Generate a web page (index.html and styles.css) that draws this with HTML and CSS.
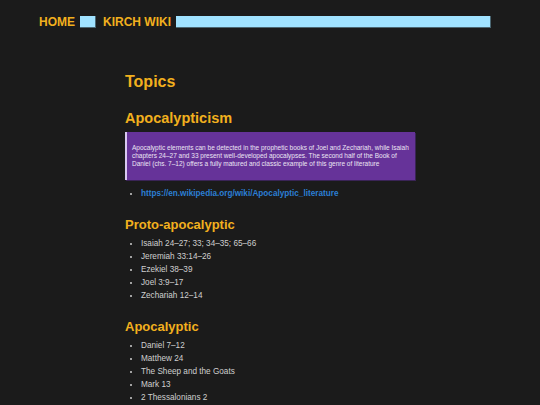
FILE: index.html
```html
<!DOCTYPE html>
<html>
<head>
<meta charset="utf-8">
<link rel="stylesheet" href="styles.css">
</head>
<body>
<nav class="nav">
  <a class="nav-link" href="#">HOME</a>
  <span class="nav-box nav-box-small"></span>
  <a class="nav-link" href="#">KIRCH WIKI</a>
  <span class="nav-box nav-box-wide"></span>
</nav>
<main class="main">
  <h1 class="title">Topics</h1>
  <h2 class="section">Apocalypticism</h2>
  <blockquote class="quote">Apocalyptic elements can be detected in the prophetic books of Joel and Zechariah, while Isaiah chapters 24–27 and 33 present well-developed apocalypses. The second half of the Book of Daniel (chs. 7–12) offers a fully matured and classic example of this genre of literature</blockquote>
  <ul class="list">
    <li><a class="link" href="#">https://en.wikipedia.org/wiki/Apocalyptic_literature</a></li>
  </ul>
  <h3 class="sub">Proto-apocalyptic</h3>
  <ul class="list">
    <li>Isaiah 24–27; 33; 34–35; 65–66</li>
    <li>Jeremiah 33:14–26</li>
    <li>Ezekiel 38–39</li>
    <li>Joel 3:9–17</li>
    <li>Zechariah 12–14</li>
  </ul>
  <h3 class="sub">Apocalyptic</h3>
  <ul class="list">
    <li>Daniel 7–12</li>
    <li>Matthew 24</li>
    <li>The Sheep and the Goats</li>
    <li>Mark 13</li>
    <li>2 Thessalonians 2</li>
  </ul>
</main>
</body>
</html>
```
FILE: styles.css
```css
html, body {
  margin: 0;
  padding: 0;
  background: #1b1b1b;
  font-family: "Liberation Sans", Arial, sans-serif;
  color: #cfcfcf;
}
.nav {
  display: flex;
  align-items: center;
  gap: 5px;
  padding: 16px 49px 0 39px;
  height: 12px;
}
.nav-link {
  color: #f2b01e;
  font-weight: bold;
  font-size: 12px;
  line-height: 12px;
  text-decoration: none;
}
.nav-box {
  height: 12px;
  box-sizing: border-box;
  background: #a0e2ff;
  border-right: 1px solid #4a6672;
  border-bottom: 1px solid #4a6672;
}
.nav-box-small {
  width: 16px;
  margin-right: 2px;
}
.nav-box-wide {
  flex: 1;
}
.main {
  width: 290px;
  margin: 0 auto;
  padding-top: 45px;
}
.title {
  color: #f2b01e;
  font-size: 16px;
  line-height: 18px;
  margin: 0 0 19px;
}
.section {
  color: #f2b01e;
  font-size: 14.5px;
  line-height: 16px;
  margin: 0 0 6px;
}
.sub {
  color: #f2b01e;
  font-size: 13px;
  line-height: 15px;
  margin: 0 0 5px;
}
.quote {
  margin: 0 0 7px;
  background: #663399;
  border-left: 2px solid #d8c8f0;
  box-shadow: 1px 1px 0 #3a2456;
  color: #ece6f4;
  font-size: 6.5px;
  line-height: 8px;
  padding: 12px 6px 12px 5px;
}
.list {
  margin: 0 0 17px;
  padding-left: 16px;
  font-size: 8.2px;
  line-height: 13px;
}
.link {
  color: #2b7fd4;
  font-weight: bold;
  text-decoration: none;
}
```
